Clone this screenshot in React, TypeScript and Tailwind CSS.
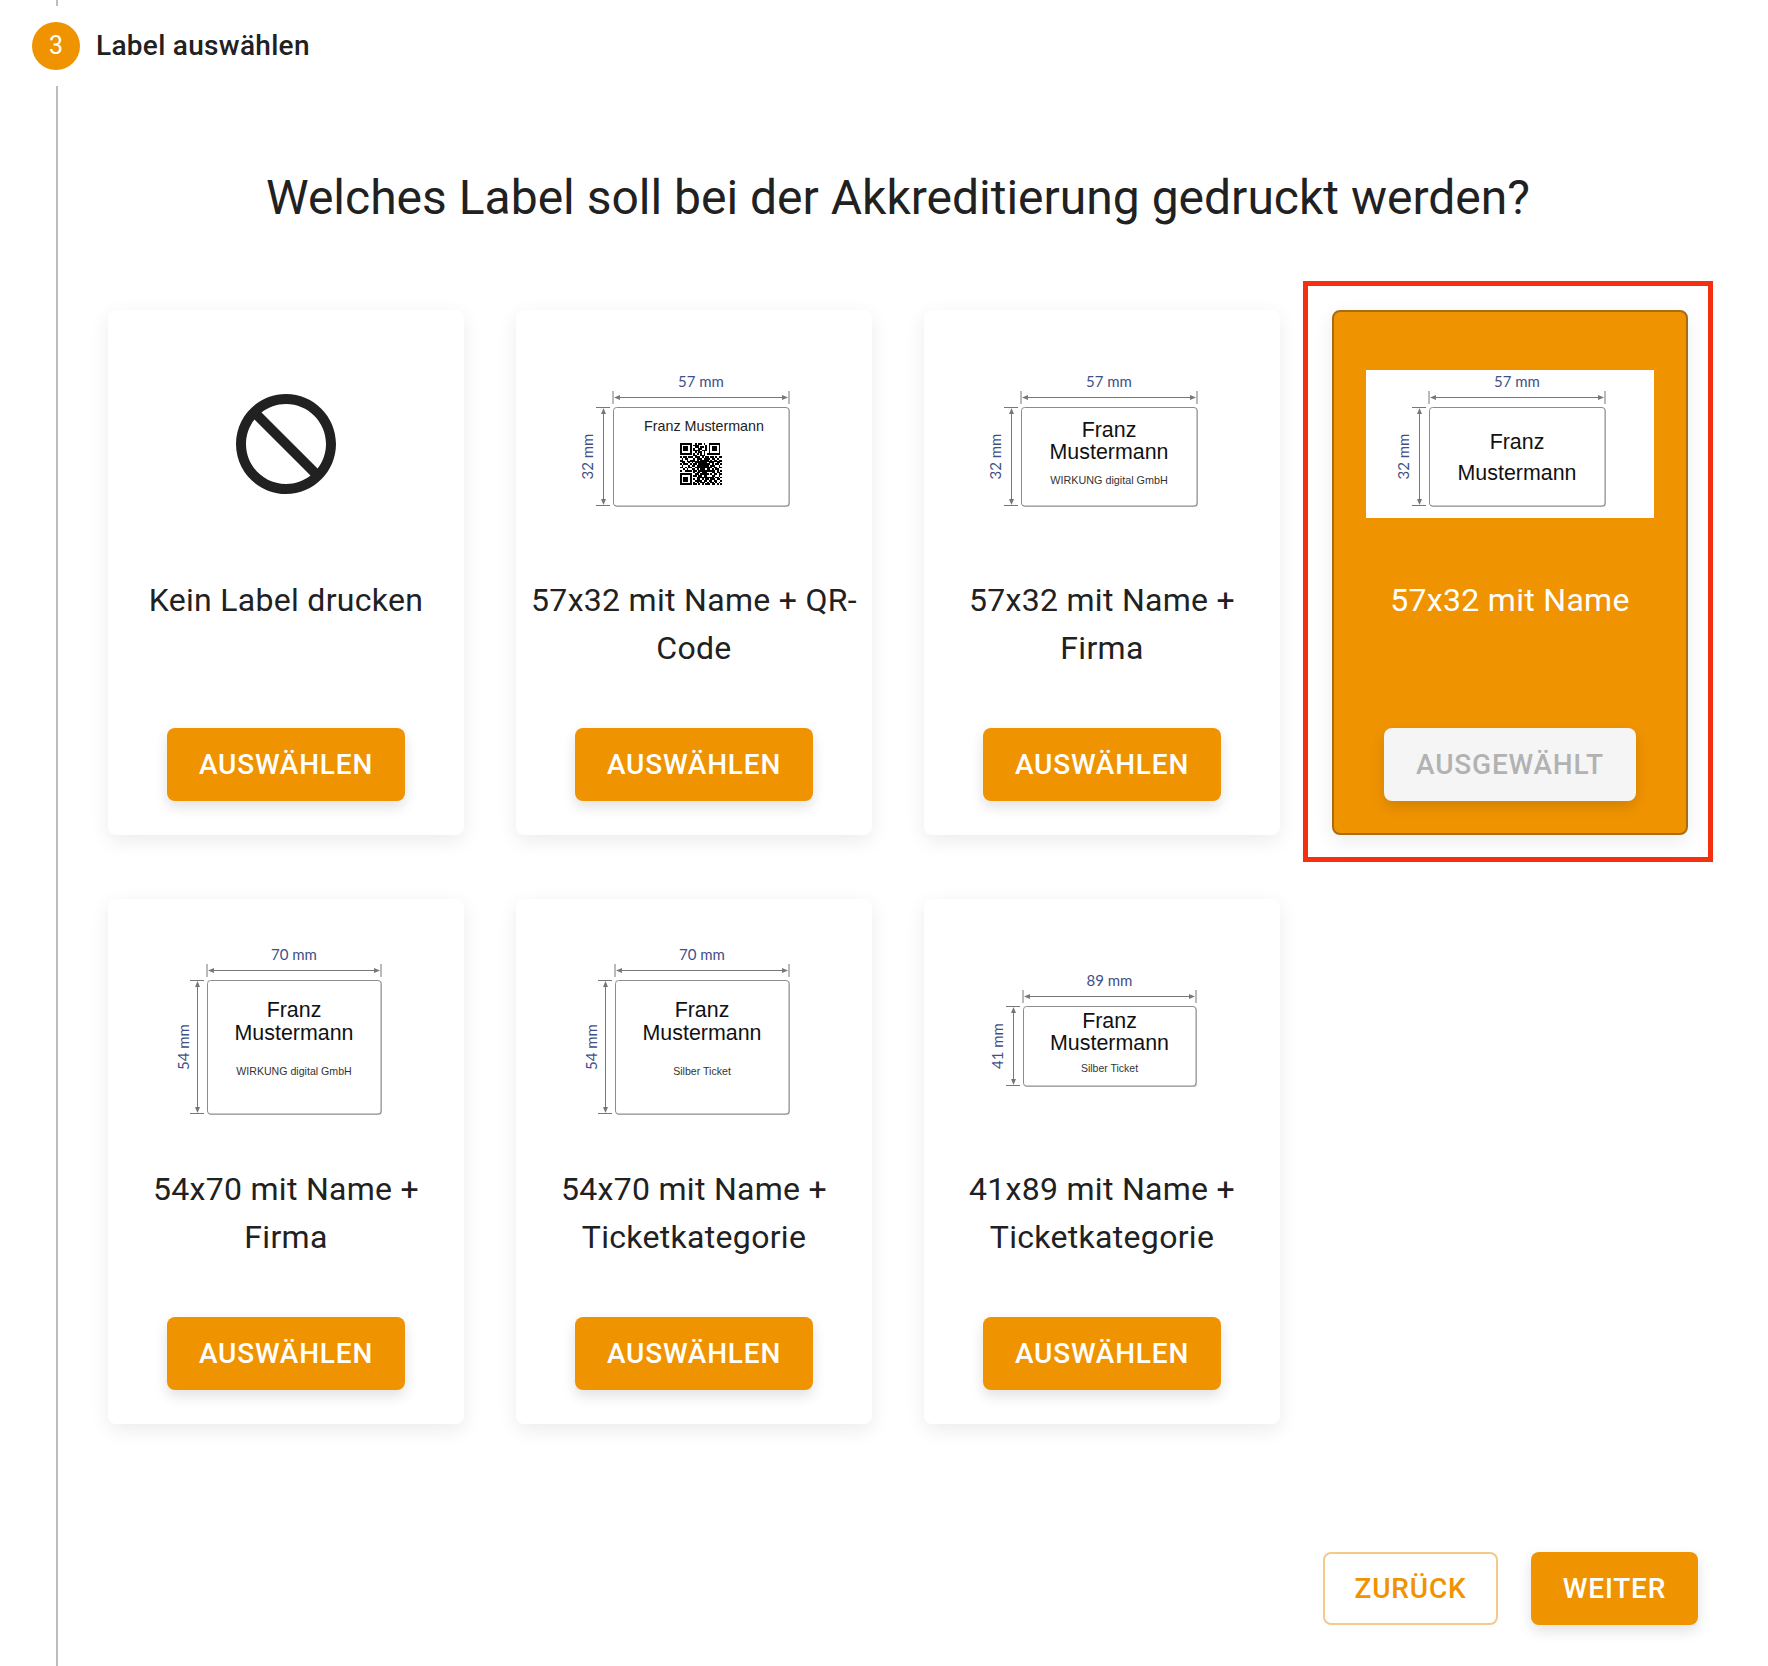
import React from "react";

const QR = [
  "1111111001011010011111110",
  "1000001011100001010000010",
  "1011101001101101010111010",
  "1011101010011001010111010",
  "1011101011110111010111010",
  "1000001001011010010000010",
  "1111111010101010111111110",
  "0000000011001110000000000",
  "1011011101110101101101011",
  "0101100010111011110110100",
  "1100101110101111101011011",
  "0110010101111111011100110",
  "1011101011011111110101101",
  "0100010110111111101110010",
  "1101011001111111111011011",
  "0010100110101110110101100",
  "1001111011011111111110101",
  "0000000010110111000110110",
  "1111111001101111101011011",
  "1000001011011011000110010",
  "1011101000111111111101101",
  "1011101010110101101110110",
  "1011101001111011011011001",
  "1000001010101110101101010",
  "1111111011010101110110101",
];

type Dim = {
  height: number; // svg height
  rect: [number, number, number, number];
  w: string;
  h: string;
  lines: { text: string; y: number; size: number; color?: string }[];
  qr?: boolean;
  cx?: number;
  hx?: number;
};

function LabelDrawing({ dim }: { dim: Dim }) {
  const [x, y, w, h] = dim.rect;
  const lineY = y - 10;
  const lineX = x - 10;
  const textX = dim.hx ?? x - 20;
  const cx = dim.cx ?? x + w / 2;
  const gray = "#777777";
  const blue = "#3f5089";
  return (
    <svg viewBox={`0 0 288 ${dim.height}`} width={288} height={dim.height} className="block shrink-0">
      {/* width dimension */}
      <text x={x + w / 2} y={lineY - 10} fontSize={15} textAnchor="middle" fill={blue} fontFamily="Lato, sans-serif">
        {dim.w}
      </text>
      <path d={`M${x} ${lineY - 6}V${lineY + 7}M${x + w} ${lineY - 6}V${lineY + 7}M${x + 2} ${lineY + 0.5}H${x + w - 2}`} stroke={gray} strokeWidth={1} fill="none" />
      <path d={`M${x + 1} ${lineY + 0.5}l6 -2.5v5zM${x + w - 1} ${lineY + 0.5}l-6 -2.5v5z`} fill={gray} />
      {/* height dimension */}
      <text
        transform={`translate(${textX} ${y + h / 2}) rotate(-90)`}
        fontSize={15}
        textAnchor="middle"
        fill={blue}
        fontFamily="Lato, sans-serif"
      >
        {dim.h}
      </text>
      <path d={`M${lineX - 7} ${y + 0.5}H${lineX + 7}M${lineX - 7} ${y + h - 0.5}H${lineX + 7}M${lineX + 0.5} ${y + 2}V${y + h - 2}`} stroke={gray} strokeWidth={1} fill="none" />
      <path d={`M${lineX + 0.5} ${y + 1}l-2.5 6h5zM${lineX + 0.5} ${y + h - 1}l-2.5 -6h5z`} fill={gray} />
      {/* label */}
      <rect x={x + 1} y={y + 1} width={w} height={h} rx={3} fill="#c4c4c4" />
      <rect x={x + 0.5} y={y + 0.5} width={w - 0.5} height={h - 0.5} rx={3} fill="#fff" stroke="#8c8c8c" strokeWidth={1} />
      {dim.lines.map((l) => (
        <text
          key={l.text}
          x={cx}
          y={l.y}
          fontSize={l.size}
          textAnchor="middle"
          fill={l.color ?? "#111111"}
          fontFamily="'Liberation Sans', Arial, sans-serif"
        >
          {l.text}
        </text>
      ))}
      {dim.qr && (
        <g transform={`translate(130 73) scale(1.68)`} fill="#000" shapeRendering="crispEdges">
          {QR.map((row, r) =>
            row.split("").map((c, i) => (c === "1" ? <rect key={`${r}-${i}`} x={i} y={r} width={1.02} height={1.02} /> : null))
          )}
        </g>
      )}
    </svg>
  );
}

function BlockIcon() {
  return (
    <svg viewBox="0 0 24 24" width={120} height={120} fill="#212121" className="-scale-x-100">
      <path d="M12 2C6.48 2 2 6.48 2 12s4.48 10 10 10 10-4.48 10-10S17.52 2 12 2zM4 12c0-4.42 3.58-8 8-8 1.85 0 3.55.63 4.9 1.69L5.69 16.9C4.63 15.55 4 13.85 4 12zm8 8c-1.85 0-3.55-.63-4.9-1.69L18.31 7.1C19.37 8.45 20 10.15 20 12c0 4.42-3.58 8-8 8z" />
    </svg>
  );
}

const short = (lines: Dim["lines"], extra?: Partial<Dim>): Dim => ({
  height: 148,
  rect: [63, 37, 176, 99],
  w: "57 mm",
  h: "32 mm",
  lines,
  ...extra,
});

const tall = (sub: string): Dim => ({
  height: 180,
  rect: [65, 37, 174, 134],
  w: "70 mm",
  h: "54 mm",
  hx: 47,
  lines: [
    { text: "Franz", y: 74, size: 21.4 },
    { text: "Mustermann", y: 97, size: 21.4 },
    { text: sub, y: 132, size: 10.6, color: "#333333" },
  ],
});

const CARDS: { title: string; dim?: Dim; selected?: boolean }[] = [
  { title: "Kein Label drucken" },
  {
    title: "57x32 mit Name + QR-Code",
    dim: short([{ text: "Franz Mustermann", y: 61, size: 14.3, color: "#222222" }], { qr: true, cx: 154 }),
  },
  {
    title: "57x32 mit Name + Firma",
    dim: short([
      { text: "Franz", y: 67, size: 21.4 },
      { text: "Mustermann", y: 89, size: 21.4 },
      { text: "WIRKUNG digital GmbH", y: 114, size: 10.8, color: "#333333" },
    ]),
  },
  {
    title: "57x32 mit Name",
    selected: true,
    dim: short([
      { text: "Franz", y: 79, size: 21.4 },
      { text: "Mustermann", y: 110, size: 21.4 },
    ]),
  },
  { title: "54x70 mit Name + Firma", dim: tall("WIRKUNG digital GmbH") },
  { title: "54x70 mit Name + Ticketkategorie", dim: tall("Silber Ticket") },
  {
    title: "41x89 mit Name + Ticketkategorie",
    dim: {
      height: 148,
      rect: [65, 47, 173, 80],
      w: "89 mm",
      h: "41 mm",
      lines: [
        { text: "Franz", y: 69, size: 21.4 },
        { text: "Mustermann", y: 91, size: 21.4 },
        { text: "Silber Ticket", y: 113, size: 10.5, color: "#333333" },
      ],
    },
  },
];

function Card({ title, dim, selected }: { title: string; dim?: Dim; selected?: boolean }) {
  return (
    <div
      className={`relative flex h-[525px] flex-col items-center rounded-[8px] shadow-[0_6px_20px_rgba(0,0,0,0.08)] ${
        selected ? "border-2 border-[#a86c12] bg-[#f09300] pt-[58px] pb-[32px]" : "bg-white pt-[60px] pb-[34px]"
      }`}
    >
      <div className="flex h-[148px] w-[288px] items-center justify-center bg-white">
        {dim ? <LabelDrawing dim={dim} /> : <BlockIcon />}
      </div>
      <div className="flex-1 px-[14px] pt-[58px] text-center">
        <p className={`text-[32px] leading-[48px] tracking-[0.3px] ${selected ? "text-white" : "text-[#212121]"}`}>{title}</p>
      </div>
      {selected ? (
        <button className="h-[73px] w-[252px] rounded-[8px] bg-[#f5f5f5] text-[28px] font-medium tracking-[0.8px] text-[#b2b2b2] shadow-[0_6px_14px_rgba(0,0,0,0.12)]">
          AUSGEWÄHLT
        </button>
      ) : (
        <button className="h-[73px] w-[238px] rounded-[8px] bg-[#f09300] text-[28px] font-medium tracking-[0.8px] text-white shadow-[0_6px_14px_rgba(0,0,0,0.12)]">
          AUSWÄHLEN
        </button>
      )}
      {selected && <div className="absolute -top-[31px] -right-[27px] -bottom-[29px] -left-[31px] border-[5px] border-[#f5300f]" />}
    </div>
  );
}

export default function App() {
  return (
    <div className="min-h-[1666px] bg-white font-['Roboto',sans-serif] text-[#212121]">
      <div className="ml-[56px] h-[6px] border-l-2 border-[#bdbdbd]" />
      <div className="mt-[16px] flex items-center gap-[16px] pl-[32px]">
        <div className="flex h-[48px] w-[48px] items-center justify-center rounded-full bg-[#f09300] text-[25px] text-white">3</div>
        <span className="text-[28px] font-medium tracking-[0.3px]">Label auswählen</span>
      </div>
      <div className="mt-[16px] ml-[56px] h-[1580px] border-l-2 border-[#bdbdbd] pl-[50px]">
        <div className="w-[1580px]">
          <h1 className="pt-[82px] text-center text-[48px] leading-[60px] font-normal">Welches Label soll bei der Akkreditierung gedruckt werden?</h1>
          <div className="mt-[82px] grid grid-cols-4 gap-x-[52px] gap-y-[64px]">
            {CARDS.map((c) => (
              <Card key={c.title} {...c} />
            ))}
          </div>
          <div className="-mr-[10px] mt-[128px] flex justify-end gap-[33px]">
            <button className="h-[73px] w-[175px] rounded-[8px] border-2 border-[#f5c98a] text-[28px] font-medium tracking-[0.8px] text-[#f09300]">
              ZURÜCK
            </button>
            <button className="h-[73px] w-[167px] rounded-[8px] bg-[#f09300] text-[28px] font-medium tracking-[0.8px] text-white shadow-[0_6px_14px_rgba(0,0,0,0.12)]">
              WEITER
            </button>
          </div>
        </div>
      </div>
    </div>
  );
}
